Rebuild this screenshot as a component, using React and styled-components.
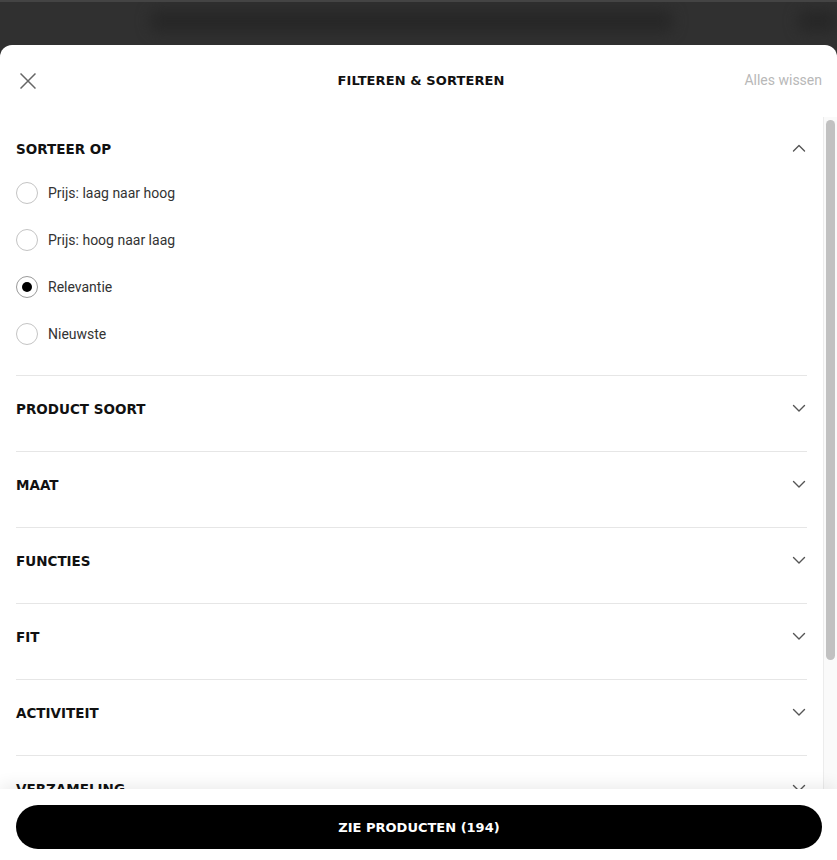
import React from 'react'
import styled, {createGlobalStyle} from 'styled-components'

const GlobalStyle = createGlobalStyle`
  html, body {
    margin: 0;
    padding: 0;
    background: #303030;
  }
  * {
    box-sizing: border-box;
  }
`;

const Page = styled.div`
  height: 860px;
  display: flex;
  flex-direction: column;
  overflow: hidden;
  background: #303030;
  border-top: 2px solid #444;
`;

const Backdrop = styled.div`
  height: 43px;
  flex-shrink: 0;
  display: flex;
  align-items: center;
  padding: 0 0 6px 150px;
  gap: 125px;
  overflow: hidden;
`;

const BlurBar = styled.div`
  width: ${props => props.width}px;
  height: 22px;
  background: #272727;
  filter: blur(7px);
  border-radius: 8px;
`;

const Sheet = styled.div`
  flex: 1;
  min-height: 0;
  display: flex;
  flex-direction: column;
  background: #fff;
  border-radius: 12px 12px 0 0;
  overflow: hidden;
`;

const Header = styled.div`
  height: 72px;
  flex-shrink: 0;
  display: grid;
  grid-template-columns: 1fr auto 1fr;
  align-items: center;
  padding: 0 15px 2px 20px;
`;

const CloseButton = styled.button`
  justify-self: start;
  width: 16px;
  height: 16px;
  padding: 0;
  margin-top: 2px;
  border: 0;
  background: none;
  cursor: pointer;
  display: flex;
  svg { display: block; }
`;

const Title = styled.h1`
  margin: 0;
  font-family: "DejaVu Sans", sans-serif;
  font-weight: 700;
  font-size: 13px;
  letter-spacing: 0.1px;
  color: #111;
`;

const ClearAll = styled.button`
  justify-self: end;
  border: 0;
  background: none;
  padding: 0;
  font-family: Roboto, "Liberation Sans", sans-serif;
  font-size: 14px;
  color: #b8b8b8;
  cursor: pointer;
`;

const Main = styled.div`
  flex: 1;
  min-height: 0;
  display: flex;
`;

const Body = styled.div`
  flex: 1;
  min-width: 0;
  overflow-y: auto;
  scrollbar-width: none;
  padding: 0 16px 44px;
  &::-webkit-scrollbar { display: none; }
`;

// scrollbar drawn by hand, headless chrome hides the native one
const ScrollTrack = styled.div`
  width: 14px;
  flex-shrink: 0;
  background: #fafafa;
  border-left: 1px solid #ececec;
  padding: 3px 2px 0 2px;
`;

const ScrollThumb = styled.div`
  height: ${props => props.size}px;
  background: #c1c1c1;
  border-radius: 5px;
`;

const Section = styled.section`
  border-top: ${props => (props.first ? 'none' : '1px solid #e6e6e6')};
`;

const SectionHead = styled.div`
  display: flex;
  align-items: center;
  justify-content: space-between;
  padding: ${props => (props.first ? '22px' : '23px')} 0 ${props => (props.open ? '10px' : '32px')};
  cursor: pointer;
`;

const SectionTitle = styled.h2`
  margin: 0;
  line-height: 20px;
  font-family: "DejaVu Sans", sans-serif;
  font-weight: 700;
  font-size: 13.5px;
  color: #111;
`;

const Chevron = styled.svg`
  width: 16px;
  height: 16px;
  display: block;
  margin-top: -3px;
`;

const Options = styled.div`
  padding-bottom: 18px;
`;

const OptionRow = styled.label`
  height: 47px;
  display: flex;
  align-items: center;
  gap: 10px;
  cursor: pointer;
`;

const RadioCircle = styled.span`
  width: 22px;
  height: 22px;
  border-radius: 50%;
  border: 1px solid ${props => (props.checked ? '#9a9a9a' : '#c4c4c4')};
  display: flex;
  align-items: center;
  justify-content: center;
  &::after {
    content: '';
    width: 10px;
    height: 10px;
    border-radius: 50%;
    background: ${props => (props.checked ? '#000' : 'transparent')};
  }
`;

const OptionLabel = styled.span`
  font-family: Roboto, "Liberation Sans", sans-serif;
  font-size: 14px;
  color: #333;
`;

const Footer = styled.div`
  position: relative;
  z-index: 1;
  flex-shrink: 0;
  background: #fff;
  padding: 16px 15px 11px 16px;
  box-shadow: 0 -5px 14px rgba(0, 0, 0, 0.07);
`;

const SubmitButton = styled.button`
  width: 100%;
  height: 44px;
  border: 0;
  border-radius: 22px;
  background: #000;
  color: #fff;
  font-family: "DejaVu Sans", sans-serif;
  font-weight: 700;
  font-size: 13px;
  cursor: pointer;
`;

const sortOptions = [
  'Prijs: laag naar hoog',
  'Prijs: hoog naar laag',
  'Relevantie',
  'Nieuwste',
]

const filters = ['PRODUCT SOORT', 'MAAT', 'FUNCTIES', 'FIT', 'ACTIVITEIT', 'VERZAMELING', 'KLEUR']

function ChevronIcon({up}) {
  return (
    <Chevron viewBox="0 0 16 16" fill="none">
      <path
        d={up ? 'M2.5 11 L8 5.5 L13.5 11' : 'M2.5 5.5 L8 11 L13.5 5.5'}
        stroke="#555"
        strokeWidth="1.4"
        strokeLinecap="round"
        strokeLinejoin="round"
      />
    </Chevron>
  )
}

function App() {
  const [sort, setSort] = React.useState('Relevantie')

  return (
    <Page>
      <GlobalStyle />
      <Backdrop>
        <BlurBar width={530} />
        <BlurBar width={40} />
      </Backdrop>
      <Sheet>
        <Header>
          <CloseButton aria-label="Sluiten">
            <svg width="16" height="16" viewBox="0 0 16 16" fill="none">
              <path d="M0.5 0.5 L15.5 15.5 M15.5 0.5 L0.5 15.5" stroke="#666" strokeWidth="1.5" />
            </svg>
          </CloseButton>
          <Title>FILTEREN &amp; SORTEREN</Title>
          <ClearAll>Alles wissen</ClearAll>
        </Header>

        <Main>
          <Body>
            <Section first>
              <SectionHead first open>
                <SectionTitle>SORTEER OP</SectionTitle>
                <ChevronIcon up />
              </SectionHead>
              <Options>
                {sortOptions.map(option => (
                  <OptionRow key={option} onClick={() => setSort(option)}>
                    <RadioCircle checked={sort === option} />
                    <OptionLabel>{option}</OptionLabel>
                  </OptionRow>
                ))}
              </Options>
            </Section>

            {filters.map(name => (
              <Section key={name}>
                <SectionHead>
                  <SectionTitle>{name}</SectionTitle>
                  <ChevronIcon />
                </SectionHead>
              </Section>
            ))}
          </Body>
          <ScrollTrack>
            <ScrollThumb size={540} />
          </ScrollTrack>
        </Main>

        <Footer>
          <SubmitButton>ZIE PRODUCTEN (194)</SubmitButton>
        </Footer>
      </Sheet>
    </Page>
  )
}

export default App
